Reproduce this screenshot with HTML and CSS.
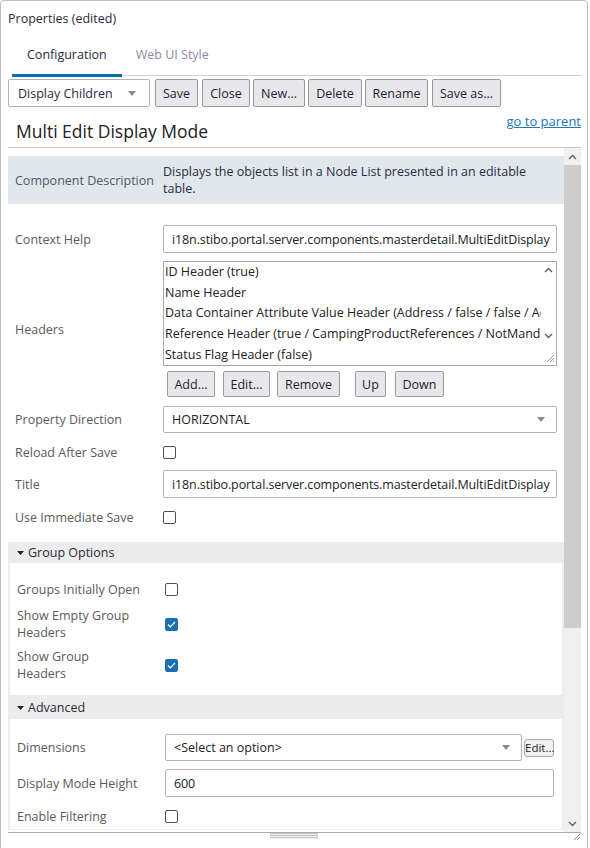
FILE: index.html
```html
<!DOCTYPE html>
<html>
<head>
<meta charset="utf-8">
<link rel="stylesheet" href="styles.css">
</head>
<body>
<div class="panel">
  <div class="title">Properties (edited)</div>
  <div class="tabs">
    <div class="tab active">Configuration</div>
    <div class="tab">Web UI Style</div>
  </div>
  <div class="toolbar">
    <div class="select tb-select"><span>Display Children</span><svg class="caret" width="8" height="5" viewBox="0 0 8 5"><path d="M0 0h8L4 5z" fill="#8a8a8a"/></svg></div>
    <button class="btn w-save">Save</button>
    <button class="btn w-close">Close</button>
    <button class="btn w-new">New...</button>
    <button class="btn w-delete">Delete</button>
    <button class="btn w-rename">Rename</button>
    <button class="btn w-saveas">Save as...</button>
  </div>
  <div class="head">
    <h1 class="heading">Multi Edit Display Mode</h1>
    <a class="link" href="#">go to parent</a>
  </div>
  <div class="scroll">
    <div class="content">
      <div class="row desc">
        <div class="label desc-label">Component Description</div>
        <div class="desc-text">Displays the objects list in a Node List presented in an editable table.</div>
      </div>

      <div class="row r-ctx">
        <div class="label">Context Help</div>
        <div class="input"><span class="clip">i18n.stibo.portal.server.components.masterdetail.MultiEditDisplay</span></div>
      </div>

      <div class="row r-headers">
        <div class="label">Headers</div>
        <div class="headers-val">
          <div class="listbox">
            <div class="items">
              <div class="item">ID Header (true)</div>
              <div class="item">Name Header</div>
              <div class="item">Data Container Attribute Value Header (Address / false / false / Address)</div>
              <div class="item">Reference Header (true / CampingProductReferences / NotMandatory)</div>
              <div class="item">Status Flag Header (false)</div>
            </div>
            <div class="lb-scroll">
              <svg width="9" height="6" viewBox="0 0 9 6"><path d="M1 5l3.5-3.5L8 5" fill="none" stroke="#606060" stroke-width="1.4"/></svg>
              <div class="lb-spacer"></div>
              <svg width="9" height="6" viewBox="0 0 9 6"><path d="M1 1l3.5 3.5L8 1" fill="none" stroke="#606060" stroke-width="1.4"/></svg>
              <svg class="lb-grip" width="10" height="10" viewBox="0 0 10 10"><path d="M9 2L2 9M9 5L5 9M9 8L8 9" stroke="#9a9a9a" stroke-width="1"/></svg>
            </div>
          </div>
          <div class="lb-buttons">
            <button class="btn sm b-add">Add...</button>
            <button class="btn sm b-edit">Edit...</button>
            <button class="btn sm b-remove">Remove</button>
            <button class="btn sm b-up">Up</button>
            <button class="btn sm b-down">Down</button>
          </div>
        </div>
      </div>

      <div class="row r-dir">
        <div class="label">Property Direction</div>
        <div class="select"><span>HORIZONTAL</span><svg class="caret" width="8" height="5" viewBox="0 0 8 5"><path d="M0 0h8L4 5z" fill="#8a8a8a"/></svg></div>
      </div>

      <div class="row r-reload">
        <div class="label">Reload After Save</div>
        <div><span class="cb"></span></div>
      </div>

      <div class="row r-title">
        <div class="label">Title</div>
        <div class="input"><span class="clip">i18n.stibo.portal.server.components.masterdetail.MultiEditDisplay</span></div>
      </div>

      <div class="row r-imm">
        <div class="label">Use Immediate Save</div>
        <div><span class="cb"></span></div>
      </div>

      <div class="group g-options">
        <div class="group-head"><svg width="7" height="4" viewBox="0 0 7 4"><path d="M0 0h7L3.5 4z" fill="#222"/></svg>Group Options</div>
        <div class="group-body">
          <div class="grow g-open">
            <div class="label">Groups Initially Open</div>
            <div><span class="cb"></span></div>
          </div>
          <div class="grow g-empty">
            <div class="label">Show Empty Group<br>Headers</div>
            <div><span class="cb on"><svg width="9" height="7" viewBox="0 0 9 7"><path d="M1 3.5l2.3 2.3L8 1" fill="none" stroke="#fff" stroke-width="1.2"/></svg></span></div>
          </div>
          <div class="grow g-show">
            <div class="label">Show Group<br>Headers</div>
            <div><span class="cb on"><svg width="9" height="7" viewBox="0 0 9 7"><path d="M1 3.5l2.3 2.3L8 1" fill="none" stroke="#fff" stroke-width="1.2"/></svg></span></div>
          </div>
        </div>
      </div>

      <div class="group g-adv">
        <div class="group-head"><svg width="7" height="4" viewBox="0 0 7 4"><path d="M0 0h7L3.5 4z" fill="#222"/></svg>Advanced</div>
        <div class="group-body">
          <div class="grow a-dim">
            <div class="label">Dimensions</div>
            <div class="dim-val">
              <div class="select dim-select"><span>&lt;Select an option&gt;</span><svg class="caret" width="8" height="5" viewBox="0 0 8 5"><path d="M0 0h8L4 5z" fill="#8a8a8a"/></svg></div>
              <button class="btn tiny">Edit...</button>
            </div>
          </div>
          <div class="grow a-height">
            <div class="label">Display Mode Height</div>
            <div class="input"><span>600</span></div>
          </div>
          <div class="grow a-filter">
            <div class="label">Enable Filtering</div>
            <div><span class="cb"></span></div>
          </div>
        </div>
      </div>
    </div>
    <div class="vscroll">
      <div class="vs-btn"><svg width="9" height="6" viewBox="0 0 9 6"><path d="M1 5l3.5-3.5L8 5" fill="none" stroke="#606060" stroke-width="1.4"/></svg></div>
      <div class="vs-thumb"></div>
      <div class="vs-track"></div>
      <div class="vs-btn"><svg width="9" height="6" viewBox="0 0 9 6"><path d="M1 1l3.5 3.5L8 1" fill="none" stroke="#606060" stroke-width="1.4"/></svg></div>
    </div>
  </div>
  <div class="footer">
    <div class="grip"></div>
    <svg class="corner" width="8" height="8" viewBox="0 0 8 8"><path d="M7 1L1 7M7 4L4 7" stroke="#8a8a8a" stroke-width="1"/></svg>
  </div>
</div>
</body>
</html>
```

FILE: styles.css
```css
html, body {
  margin: 0;
  padding: 0;
  background: #fff;
}
body {
  font-family: "Open Sans", "Noto Sans", sans-serif;
  font-size: 12.5px;
  color: #333;
  overflow: hidden;
}
.panel {
  width: 586px;
  height: 860px;
  border: 1px solid #bdbdbd;
  border-radius: 4px;
  box-sizing: content-box;
  overflow: hidden;
}
.title {
  height: 36px;
  line-height: 36px;
  padding-left: 7px;
  color: #2b2b3b;
}
.tabs {
  display: flex;
  margin: 0 6px 0 11px;
  height: 38px;
  border-bottom: 1px solid #cfcfcf;
}
.tab {
  padding: 0 14px;
  line-height: 36px;
  color: #8b8ba0;
}
.tab.active {
  padding: 0 15px;
  color: #2b2b3b;
  border-bottom: 3px solid #0b6bb0;
  margin-bottom: -2px;
}
.toolbar {
  display: flex;
  align-items: center;
  margin: 3px 0 0 7px;
  height: 28px;
}
.select {
  display: flex;
  align-items: center;
  justify-content: space-between;
  box-sizing: border-box;
  height: 28px;
  border: 1px solid #b3b3b3;
  border-radius: 2px;
  background: #fff;
  padding: 0 13px 0 8px;
  color: #222;
}
.tb-select {
  width: 142px;
  padding-left: 9px;
  color: #2b2b3b;
}
.btn {
  font-family: inherit;
  font-size: 12.5px;
  height: 28px;
  box-sizing: border-box;
  border: 1px solid #9a9a9a;
  border-radius: 2px;
  background: #e8e8ec;
  color: #1e1e30;
  padding: 0;
  margin: 0;
}
.w-save { width: 43px; margin-left: 5px; }
.w-close { width: 48px; margin-left: 4px; }
.w-new { width: 52px; margin-left: 3px; }
.w-delete { width: 54px; margin-left: 3px; }
.w-rename { width: 63px; margin-left: 3px; }
.w-saveas { width: 69px; margin-left: 4px; }
.head {
  display: flex;
  justify-content: space-between;
  margin: 0 6px 0 7px;
  height: 41px;
  border-bottom: 1px solid #c8c8c8;
  box-sizing: border-box;
}
.heading {
  margin: 0;
  font-weight: normal;
  font-size: 17.5px;
  color: #222;
  padding: 13px 0 0 8px;
  line-height: 22px;
}
.link {
  color: #2275c0;
  font-size: 13px;
  margin-top: 6px;
  line-height: 16px;
}
.scroll {
  display: flex;
  margin: 0 6px 0 7px;
  height: 684px;
  border-bottom: 1px solid #ababab;
  overflow: hidden;
}
.content {
  width: 556px;
  padding-top: 8px;
  flex: none;
}
.vscroll {
  width: 17px;
  display: flex;
  flex-direction: column;
  background: #f0f0f0;
}
.vs-btn {
  height: 17px;
  display: flex;
  align-items: center;
  justify-content: center;
}
.vs-thumb {
  height: 463px;
  background: #cdcdcd;
}
.vs-track { flex: 1; }
.row {
  display: grid;
  grid-template-columns: 155px 1fr;
  align-items: center;
  padding-right: 7px;
}
.label {
  padding-left: 7px;
  color: #5a5a5a;
  line-height: 17px;
}
.desc {
  background: #e0e8eb;
  height: 48px;
  padding-right: 12px;
}
.desc-label { color: #56566e; }
.desc-text { color: #2b2b45; line-height: 17px; }
.input {
  box-sizing: border-box;
  height: 28px;
  border: 1px solid #b3b3b3;
  border-radius: 2px;
  padding: 0 6px 0 8px;
  display: flex;
  align-items: center;
  color: #222;
  overflow: hidden;
  white-space: nowrap;
  min-width: 0;
  letter-spacing: -0.12px;
}
.clip { overflow: hidden; }
.r-ctx { margin-top: 21px; }
.r-headers { margin-top: 8px; }
.headers-val { display: flex; flex-direction: column; min-width: 0; }
.listbox {
  box-sizing: border-box;
  height: 105px;
  border: 1px solid #a9a9a9;
  display: flex;
  color: #222;
}
.items {
  flex: 1;
  min-width: 0;
  overflow: hidden;
  padding: 0 0 0 1px;
  white-space: nowrap;
}
.item { line-height: 20.7px; }
.lb-scroll {
  width: 15px;
  flex: none;
  display: flex;
  flex-direction: column;
  align-items: center;
  padding-top: 5px;
}
.lb-spacer { flex: 1; }
.lb-grip { align-self: flex-end; margin: 14px 1px 2px 0; }
.lb-buttons {
  display: flex;
  margin-top: 5px;
  padding-left: 4px;
}
.btn.sm { height: 26px; }
.b-add { width: 48px; }
.b-edit { width: 47px; margin-left: 8px; }
.b-remove { width: 63px; margin-left: 7px; }
.b-up { width: 31px; margin-left: 15px; }
.b-down { width: 49px; margin-left: 9px; }
.r-dir { margin-top: 9px; }
.r-dir .select { height: 27px; padding-right: 11px; }
.r-reload { margin-top: 6px; height: 26px; }
.r-title { margin-top: 5px; }
.r-imm { margin-top: 7px; height: 24px; }
.cb {
  display: flex;
  align-items: center;
  justify-content: center;
  width: 13px;
  height: 13px;
  box-sizing: border-box;
  border: 1px solid #505050;
  border-radius: 2px;
  background: #fff;
}
.cb.on {
  background: #1d6fb4;
  border-color: #1d6fb4;
}
.group { background: #ececec; }
.g-options { margin-top: 13px; }
.group-head {
  height: 21px;
  display: flex;
  align-items: center;
  padding-left: 9px;
  color: #2b2b3b;
}
.group-head svg { margin-right: 4px; }
.group-body {
  margin: 0 2px;
  background: #fff;
  border-bottom: 1px solid #ececec;
}
.g-options .group-body { height: 132px; }
.grow {
  display: grid;
  grid-template-columns: 155px 1fr;
  align-items: center;
  padding-right: 8px;
}
.g-open { padding-top: 14px; height: 24px; }
.g-empty { margin-top: 6px; height: 34px; }
.g-show { margin-top: 7px; height: 34px; }
.g-adv .group-head { height: 23px; }
.a-dim { padding-top: 15px; }
.dim-val { display: flex; align-items: center; }
.dim-select { flex: 1; height: 27px; padding-right: 11px; }
.btn.tiny {
  height: 18px;
  width: 30px;
  margin-left: 2px;
  font-size: 11.5px;
  border-color: #aaa;
  background: #f0f0f0;
  border-radius: 3px;
  padding: 0;
}
.a-height { margin-top: 8px; }
.a-filter { margin-top: 6px; height: 26px; }
.footer {
  display: flex;
  justify-content: flex-end;
  align-items: flex-start;
  height: 10px;
  margin-right: 6px;
}
.grip {
  width: 48px;
  height: 6px;
  margin-right: 255px;
  background: repeating-linear-gradient(#c6c6c6 0 1px, #ececec 1px 2px);
}
```
